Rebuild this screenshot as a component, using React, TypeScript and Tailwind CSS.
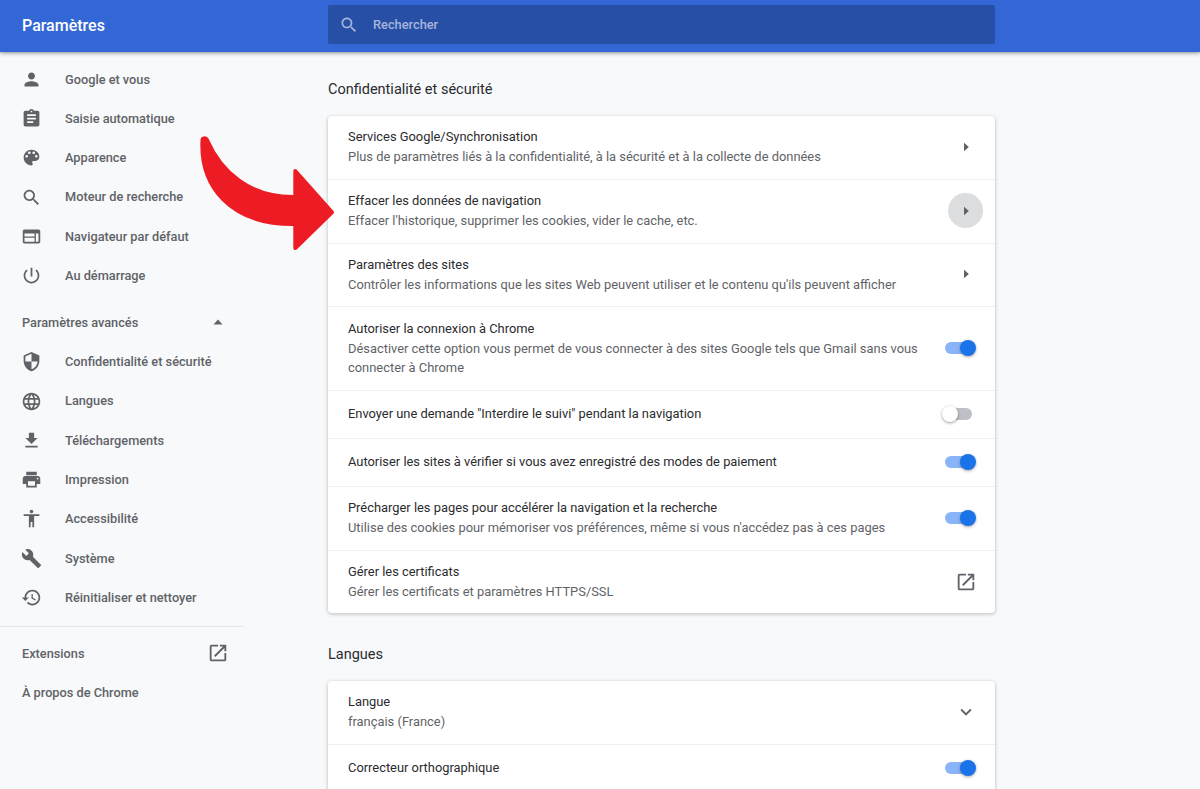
import React from "react";

const P = {
  person: "M12 12c2.21 0 4-1.79 4-4s-1.79-4-4-4-4 1.79-4 4 1.79 4 4 4zm0 2c-2.67 0-8 1.34-8 4v2h16v-2c0-2.66-5.33-4-8-4z",
  assignment: "M19 3h-4.18C14.4 1.84 13.3 1 12 1c-1.3 0-2.4.84-2.82 2H5c-1.1 0-2 .9-2 2v14c0 1.1.9 2 2 2h14c1.1 0 2-.9 2-2V5c0-1.1-.9-2-2-2zm-7 0c.55 0 1 .45 1 1s-.45 1-1 1-1-.45-1-1 .45-1 1-1zm2 14H7v-2h7v2zm3-4H7v-2h10v2zm0-4H7V7h10v2z",
  palette: "M12 3c-4.97 0-9 4.03-9 9s4.03 9 9 9c.83 0 1.5-.67 1.5-1.5 0-.39-.15-.74-.39-1.01-.23-.26-.38-.61-.38-.99 0-.83.67-1.5 1.5-1.5H16c2.76 0 5-2.24 5-5 0-4.42-4.03-8-9-8zm-5.5 9c-.83 0-1.5-.67-1.5-1.5S5.67 9 6.5 9 8 9.67 8 10.5 7.33 12 6.5 12zm3-4C8.67 8 8 7.33 8 6.5S8.67 5 9.5 5s1.5.67 1.5 1.5S10.33 8 9.5 8zm5 0c-.83 0-1.5-.67-1.5-1.5S13.67 5 14.5 5s1.5.67 1.5 1.5S15.33 8 14.5 8zm3 4c-.83 0-1.5-.67-1.5-1.5S16.67 9 17.5 9s1.5.67 1.5 1.5-.67 1.5-1.5 1.5z",
  search: "M15.5 14h-.79l-.28-.27C15.41 12.59 16 11.11 16 9.5 16 5.91 13.09 3 9.5 3S3 5.91 3 9.5 5.91 16 9.5 16c1.61 0 3.09-.59 4.23-1.57l.27.28v.79l5 4.99L20.49 19l-4.99-5zm-6 0C7.01 14 5 11.99 5 9.5S7.01 5 9.5 5 14 7.01 14 9.5 11.99 14 9.5 14z",
  web: "M20 4H4c-1.1 0-2 .9-2 2v12c0 1.1.9 2 2 2h16c1.1 0 2-.9 2-2V6c0-1.1-.9-2-2-2zM4 18V8.500h16V18H4zm0-4.500h11.500V12H4v1.500zM15.500 8.500V18H17V8.500h-1.500z",
  power: "M13 3h-2v10h2V3zm4.830 2.170l-1.420 1.420C17.990 7.860 19 9.810 19 12c0 3.870-3.130 7-7 7s-7-3.130-7-7c0-2.190 1.010-4.140 2.580-5.420L6.170 5.170C4.230 6.820 3 9.260 3 12c0 4.970 4.030 9 9 9s9-4.030 9-9c0-2.740-1.230-5.180-3.170-6.830z",
  security: "M12 1L3 5v6c0 5.550 3.840 10.740 9 12 5.160-1.260 9-6.450 9-12V5l-9-4zm0 10.990h7c-.530 4.120-3.280 7.790-7 8.940V12H5V6.300l7-3.110v8.800z",
  language: "M11.990 2C6.470 2 2 6.480 2 12s4.470 10 9.990 10C17.520 22 22 17.520 22 12S17.520 2 11.990 2zm6.930 6h-2.950c-.320-1.250-.780-2.450-1.380-3.560 1.840.630 3.370 1.910 4.330 3.560zM12 4.040c.830 1.200 1.480 2.530 1.910 3.960h-3.820c.430-1.430 1.080-2.760 1.910-3.960zM4.260 14C4.100 13.360 4 12.690 4 12s.100-1.360.260-2h3.380c-.080.660-.140 1.320-.140 2 0 .680.060 1.340.140 2H4.260zm.820 2h2.950c.320 1.250.780 2.450 1.380 3.560-1.840-.630-3.370-1.900-4.330-3.560zm2.950-8H5.080c.960-1.660 2.490-2.930 4.330-3.560C8.810 5.550 8.350 6.750 8.030 8zM12 19.960c-.830-1.200-1.480-2.530-1.910-3.960h3.820c-.430 1.430-1.080 2.760-1.910 3.960zM14.340 14H9.660c-.090-.660-.160-1.320-.160-2 0-.680.070-1.350.160-2h4.680c.090.650.160 1.320.160 2 0 .680-.070 1.340-.160 2zm.250 5.560c.600-1.110 1.060-2.310 1.380-3.560h2.950c-.960 1.650-2.490 2.930-4.330 3.560zM16.360 14c.080-.660.140-1.320.140-2 0-.680-.060-1.340-.140-2h3.380c.160.640.260 1.310.260 2s-.100 1.360-.260 2h-3.380z",
  download: "M19 9h-4V3H9v6H5l7 7 7-7zM5 18v2h14v-2H5z",
  print: "M19 8H5c-1.660 0-3 1.340-3 3v6h4v4h12v-4h4v-6c0-1.660-1.340-3-3-3zm-3 11H8v-5h8v5zm3-7c-.550 0-1-.450-1-1s.450-1 1-1 1 .450 1 1-.450 1-1 1zm-1-9H6v4h12V3z",
  accessibility: "M12 2c1.100 0 2 .900 2 2s-.900 2-2 2-2-.900-2-2 .900-2 2-2zm9 7h-6v13h-2v-6h-2v6H9V9H3V7h18v2z",
  build: "M22.700 19l-9.100-9.100c.900-2.300.400-5-1.500-6.900-2-2-5-2.400-7.400-1.300L9 6 6 9 1.600 4.700C.400 7.100.900 10.100 2.900 12.100c1.900 1.900 4.600 2.400 6.900 1.500l9.100 9.100c.400.400 1 .400 1.400 0l2.300-2.300c.500-.400.500-1.100.100-1.400z",
  restore: "M13 3c-4.970 0-9 4.030-9 9H1l3.890 3.890.070.140L9 12H6c0-3.870 3.130-7 7-7s7 3.130 7 7-3.130 7-7 7c-1.930 0-3.680-.790-4.940-2.060l-1.420 1.420C8.270 19.990 10.510 21 13 21c4.970 0 9-4.030 9-9s-4.030-9-9-9zm-1 5v5l4.280 2.540.720-1.210-3.500-2.080V8H12z",
  open: "M19 19H5V5h7V3H5c-1.110 0-2 .900-2 2v14c0 1.100.890 2 2 2h14c1.100 0 2-.900 2-2v-7h-2v7zM14 3v2h3.590l-9.830 9.830 1.410 1.410L19 6.410V10h2V3h-7z",
  expand: "M16.590 8.590L12 13.170 7.410 8.590 6 10l6 6 6-6z",
};

function Icon({ d, className }: { d: string; className: string }) {
  return (
    <svg viewBox="0 0 24 24" fill="currentColor" className={className}>
      <path d={d} />
    </svg>
  );
}

function Item({ d, label }: { d: string; label: string }) {
  return (
    <div className="flex h-[39.3px] items-center pl-[21px] text-[12.75px] font-medium text-[#5f6368]">
      <Icon d={d} className="h-[21px] w-[21px] shrink-0" />
      <span className="ml-[23px]">{label}</span>
    </div>
  );
}

function Caret() {
  return (
    <svg viewBox="0 0 10 10" className="h-[10px] w-[10px] text-[#5f6368]" fill="currentColor">
      <path d="M3 .800L7.800 5 3 9.200z" />
    </svg>
  );
}

function Toggle({ on }: { on: boolean }) {
  return (
    <div className="relative mr-[3px] h-3 w-[27px] shrink-0 rounded-full" style={{ backgroundColor: on ? "#8ab4f8" : "#bdc1c6" }}>
      <div
        className={
          on
            ? "absolute -top-[2px] left-[15px] h-4 w-4 rounded-full bg-[#1a73e8] shadow-[0_1px_3px_rgba(0,0,0,0.35)]"
            : "absolute -top-[2px] -left-[3px] h-4 w-4 rounded-full bg-white shadow-[0_1px_3px_rgba(0,0,0,0.4)]"
        }
      />
    </div>
  );
}

function Row({
  h,
  title,
  sub,
  right,
  first,
}: {
  h: string;
  title: string;
  sub?: React.ReactNode;
  right: React.ReactNode;
  first?: boolean;
}) {
  return (
    <div className={`flex ${h} items-center pb-[1px] pl-5 ${first ? "" : "border-t border-[#eeeff1]"}`}>
      <div className="min-w-0 flex-1">
        <div className="text-[12.88px] leading-[20px] text-[#2a2b2e]">{title}</div>
        {sub && <div className="text-[12.9px] leading-[19.500px] text-[#5f6368]">{sub}</div>}
      </div>
      <div className="flex w-[70px] shrink-0 items-center justify-end pr-[20px]">{right}</div>
    </div>
  );
}

const Chevron = () => (
  <div className="flex w-[19px] justify-center">
    <Caret />
  </div>
);

export default function App() {
  return (
    <div className="relative h-[789px] w-[1200px] overflow-hidden bg-[#f8f9fa] font-['Roboto',sans-serif]">
      <header className="relative z-10 flex h-[52px] items-center bg-[#3367d6] shadow-[0_1px_4px_rgba(0,0,0,0.45)]">
        <div className="w-[328px] pl-[22px] text-[16px] font-medium text-white">Paramètres</div>
        <div className="mb-[3px] flex h-[39px] w-[667px] items-center rounded-[2px] bg-[#274fa5] pl-[11px] text-[12.8px] font-medium text-[#a5b5dc]">
          <Icon d={P.search} className="h-5 w-5" />
          <span className="ml-[14px]">Rechercher</span>
        </div>
      </header>

      <div className="flex">
        <aside className="w-[244px] shrink-0 pt-[7.500px]">
          <Item d={P.person} label="Google et vous" />
          <Item d={P.assignment} label="Saisie automatique" />
          <Item d={P.palette} label="Apparence" />
          <Item d={P.search} label="Moteur de recherche" />
          <Item d={P.web} label="Navigateur par défaut" />
          <Item d={P.power} label="Au démarrage" />
          <div className="mt-[7.500px] flex h-[39.300px] items-center pl-[22px] pr-[21px] text-[12.75px] font-medium text-[#5f6368]">
            <span className="flex-1">Paramètres avancés</span>
            <svg viewBox="0 0 10 6" className="h-[6px] w-[10px]" fill="currentColor">
              <path d="M5 .500L9.500 5.500H.500z" />
            </svg>
          </div>
          <Item d={P.security} label="Confidentialité et sécurité" />
          <Item d={P.language} label="Langues" />
          <Item d={P.download} label="Téléchargements" />
          <Item d={P.print} label="Impression" />
          <Item d={P.accessibility} label="Accessibilité" />
          <Item d={P.build} label="Système" />
          <Item d={P.restore} label="Réinitialiser et nettoyer" />
          <div className="mt-[8.500px] border-t border-[#e6e7e9]" />
          <div className="mt-[7px] flex h-[39.300px] items-center pl-[22px] pr-[15px] text-[12.75px] font-medium text-[#5f6368]">
            <span className="flex-1">Extensions</span>
            <Icon d={P.open} className="h-[22px] w-[22px]" />
          </div>
          <div className="flex h-[39.300px] items-center pl-[22px] text-[12.75px] font-medium text-[#5f6368]">À propos de Chrome</div>
        </aside>

        <main className="ml-[84px] w-[667px]">
          <h2 className="mt-[28px] text-[14.500px] leading-[20px] font-normal text-[#2a2b2e]">Confidentialité et sécurité</h2>
          <section className="mt-[16px] rounded-[4px] bg-white shadow-[0_1px_3px_1px_rgba(60,64,67,0.22)]">
            <Row first h="h-[63px]" title="Services Google/Synchronisation" sub="Plus de paramètres liés à la confidentialité, à la sécurité et à la collecte de données" right={<Chevron />} />
            <Row
              h="h-[63.500px]"
              title="Effacer les données de navigation"
              sub="Effacer l'historique, supprimer les cookies, vider le cache, etc."
              right={
                <div className="-mr-[8px] flex h-[35px] w-[35px] items-center justify-center rounded-full bg-[#dcdddf]">
                  <Caret />
                </div>
              }
            />
            <Row h="h-[63.500px]" title="Paramètres des sites" sub="Contrôler les informations que les sites Web peuvent utiliser et le contenu qu'ils peuvent afficher" right={<Chevron />} />
            <Row
              h="h-[84px]"
              title="Autoriser la connexion à Chrome"
              sub={
                <>
                  Désactiver cette option vous permet de vous connecter à des sites Google tels que Gmail sans vous
                  <br />
                  connecter à Chrome
                </>
              }
              right={<Toggle on />}
            />
            <Row h="h-[48px]" title={'Envoyer une demande "Interdire le suivi" pendant la navigation'} right={<Toggle on={false} />} />
            <Row h="h-[48px]" title="Autoriser les sites à vérifier si vous avez enregistré des modes de paiement" right={<Toggle on />} />
            <Row h="h-[64px]" title="Précharger les pages pour accélérer la navigation et la recherche" sub="Utilise des cookies pour mémoriser vos préférences, même si vous n'accédez pas à ces pages" right={<Toggle on />} />
            <Row h="h-[63px]" title="Gérer les certificats" sub="Gérer les certificats et paramètres HTTPS/SSL" right={<Icon d={P.open} className="-mr-[1.500px] h-[22px] w-[22px] text-[#5f6368]" />} />
          </section>

          <h2 className="mt-[31.500px] text-[14.500px] leading-[20px] font-normal text-[#2a2b2e]">Langues</h2>
          <section className="mt-[16px] rounded-[4px] bg-white shadow-[0_1px_3px_1px_rgba(60,64,67,0.22)]">
            <Row first h="h-[63px]" title="Langue" sub="français (France)" right={<Icon d={P.expand} className="-mr-[1.500px] h-[22px] w-[22px] text-[#5f6368]" />} />
            <Row h="h-[48px]" title="Correcteur orthographique" right={<Toggle on />} />
          </section>
        </main>
      </div>

      <svg className="absolute top-0 left-0 z-20 h-[789px] w-[1200px]" viewBox="0 0 1200 789">
        <path
          fill="#ed1c24"
          stroke="#ed1c24"
          strokeWidth="4"
          strokeLinejoin="round"
          d="M204 138.500 C205.500 138 206.500 139 207 140 C221 172 250 198 295.300 197 L295.300 171 L332 212.300 L295.300 248 L295.300 224 C230 225 200 186 202.500 140 C202.500 139 203 138.500 204 138.500 Z"
        />
      </svg>
    </div>
  );
}
